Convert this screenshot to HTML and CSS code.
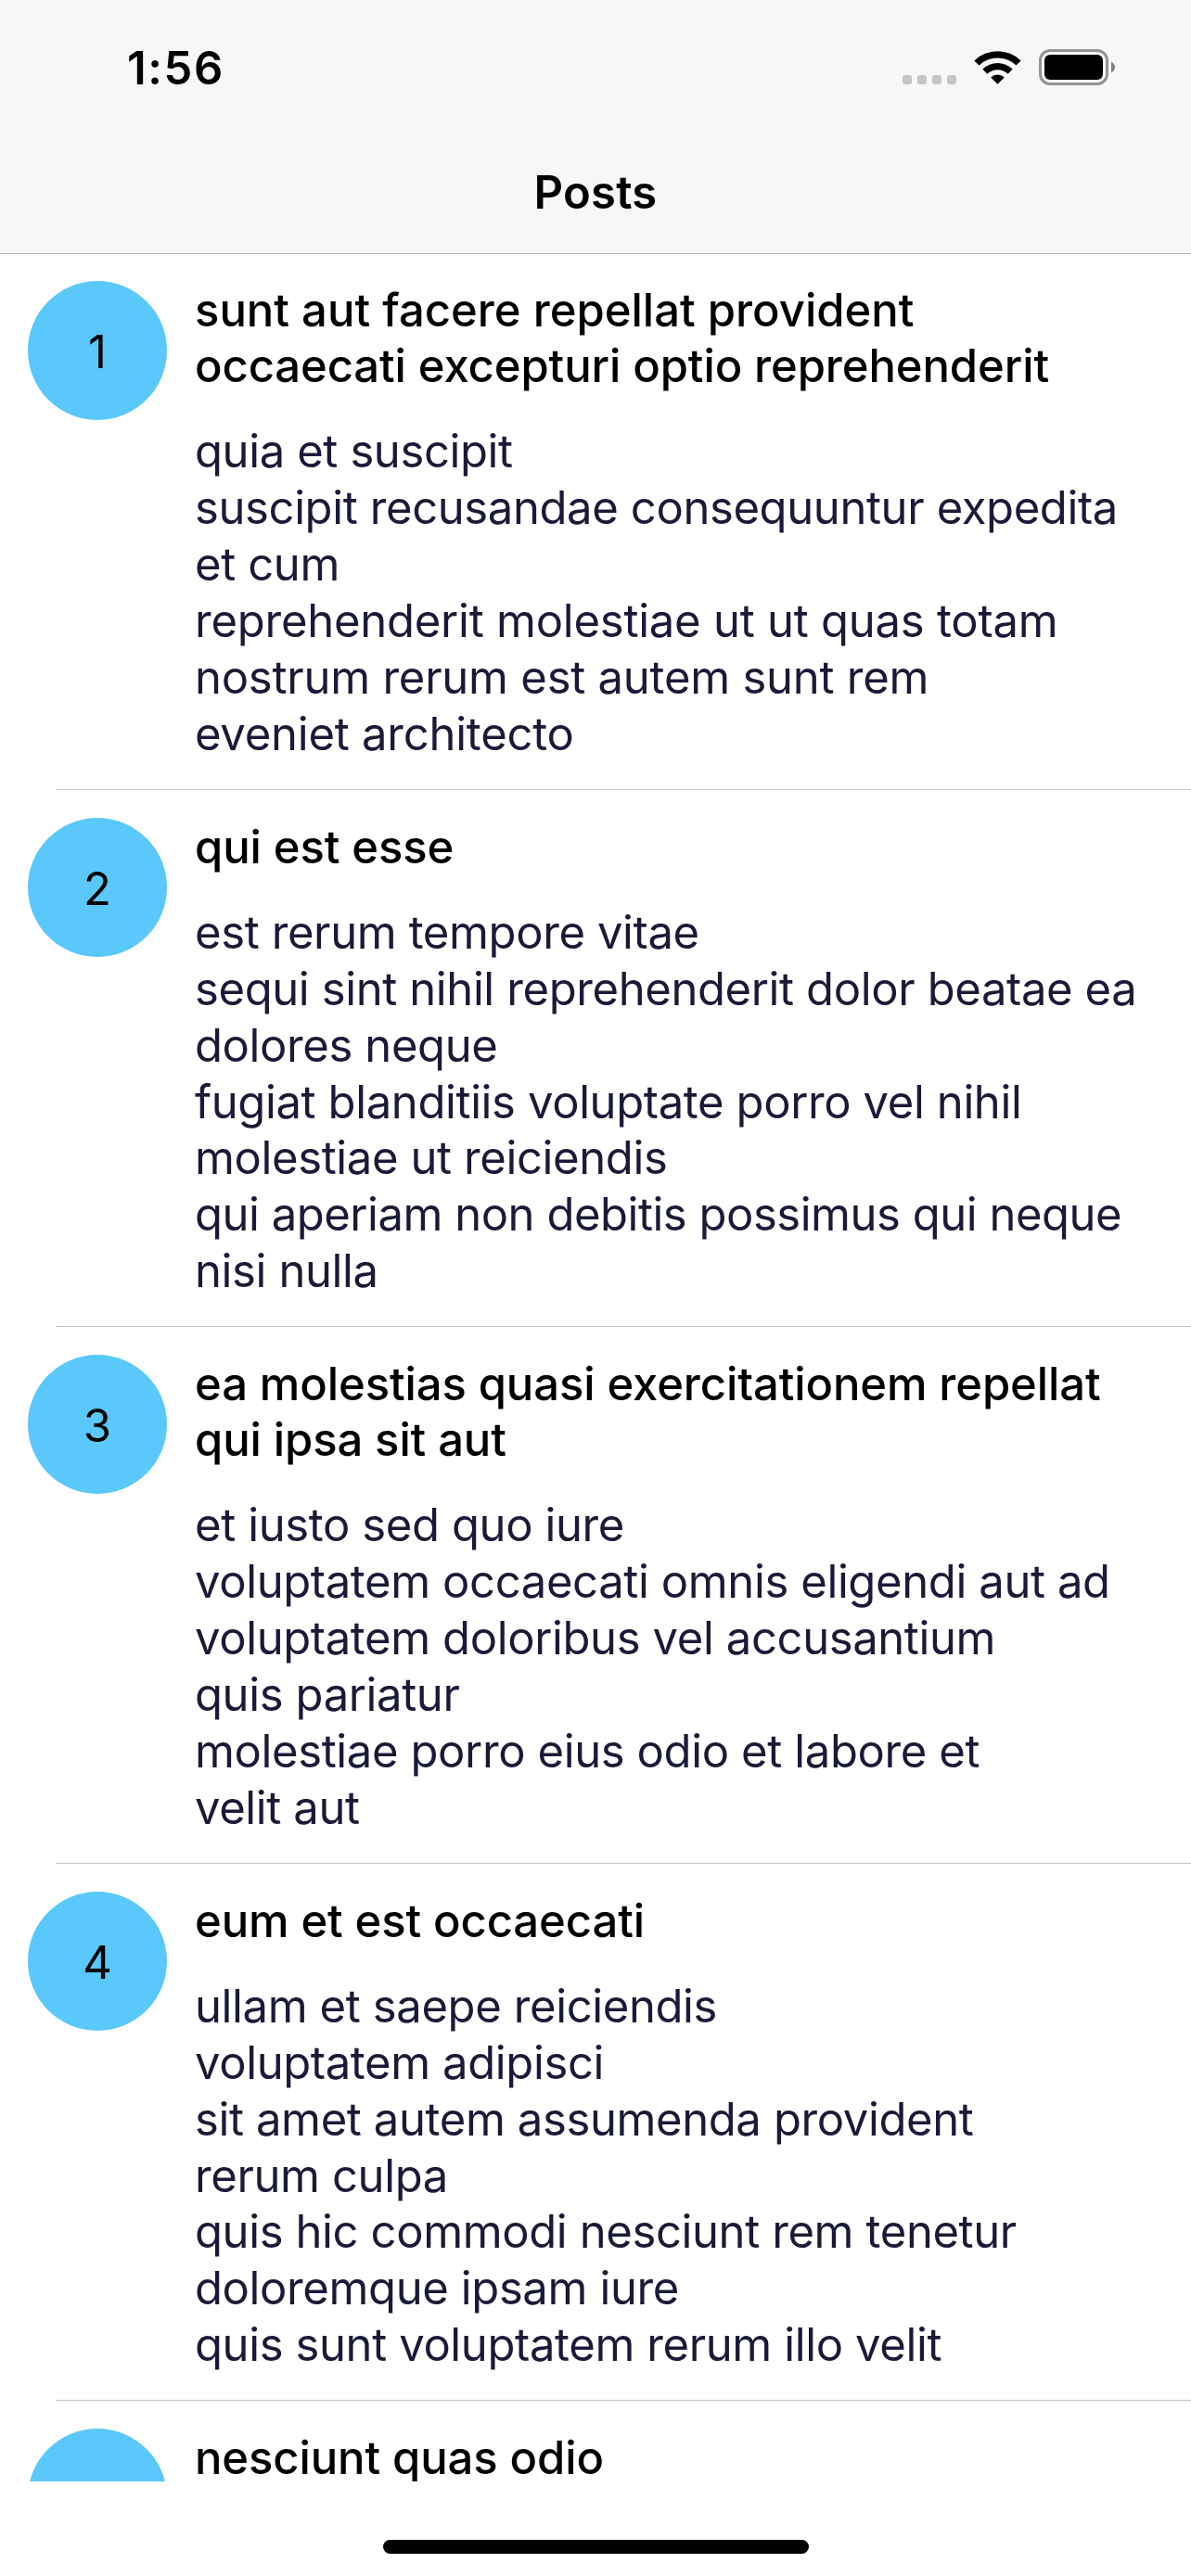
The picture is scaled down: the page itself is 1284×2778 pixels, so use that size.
FILE: index.html
```html
<!DOCTYPE html>
<html lang="en">
<head>
<meta charset="utf-8">
<title>Posts</title>
<link rel="stylesheet" href="styles.css">
</head>
<body>
<div class="screen">
  <header class="nav">
    <div class="status">
      <span class="time">1:56</span>
      <svg class="status-icons" width="232" height="42" viewBox="0 0 232 42">
        <g fill="#c5c5c5">
          <rect x="1" y="29" width="10" height="10" rx="3"/>
          <rect x="17" y="29" width="10" height="10" rx="3"/>
          <rect x="33" y="29" width="10" height="10" rx="3"/>
          <rect x="49" y="29" width="10" height="10" rx="3"/>
        </g>
        <g>
          <path d="M103.500 38.800L96.200 31.400A10.500 10.500 0 0 1 110.800 31.400Z"/>
          <path d="M87.300 22.600A23.000 23.000 0 0 1 119.700 22.600L114.600 27.700A15.900 15.900 0 0 0 92.400 27.700Z"/>
          <path d="M78.400 13.500A35.700 35.700 0 0 1 128.600 13.500L123.500 18.600A28.600 28.600 0 0 0 83.500 18.600Z"/>
        </g>
        <rect x="149.500" y="2.500" width="72" height="36" rx="10.500" fill="none" stroke="#949494" stroke-width="3"/>
        <rect x="154" y="7" width="63" height="27" rx="6"/>
        <path d="M226 14.500Q230 17 230 20.500T226 26.500Z" fill="#808080"/>
      </svg>
    </div>
    <h1 class="nav-title">Posts</h1>
  </header>
  <main class="list">
    <article class="post">
      <div class="badge">1</div>
      <div class="content">
        <h2 class="title"><span class="wide">sunt aut facere repellat provident</span><br>occaecati excepturi optio reprehenderit</h2>
        <p class="text">quia et suscipit<br>suscipit recusandae consequuntur expedita<br>et cum<br><span class="loose">reprehenderit molestiae ut ut quas totam</span><br><span class="loose">nostrum rerum est autem sunt rem</span><br><span class="loose">eveniet architecto</span></p>
      </div>
    </article>
    <article class="post">
      <div class="badge">2</div>
      <div class="content">
        <h2 class="title">qui est esse</h2>
        <p class="text">est rerum tempore vitae<br>sequi sint nihil reprehenderit dolor beatae ea<br>dolores neque<br>fugiat blanditiis voluptate porro vel nihil<br>molestiae ut reiciendis<br><span class="tight">qui aperiam non debitis possimus qui neque</span><br>nisi nulla</p>
      </div>
    </article>
    <article class="post">
      <div class="badge">3</div>
      <div class="content">
        <h2 class="title">ea molestias quasi exercitationem repellat<br>qui ipsa sit aut</h2>
        <p class="text">et iusto sed quo iure<br>voluptatem occaecati omnis eligendi aut ad<br>voluptatem doloribus vel accusantium<br>quis pariatur<br>molestiae porro eius odio et labore et<br>velit aut</p>
      </div>
    </article>
    <article class="post">
      <div class="badge">4</div>
      <div class="content">
        <h2 class="title">eum et est occaecati</h2>
        <p class="text">ullam et saepe reiciendis<br>voluptatem adipisci<br>sit amet autem assumenda provident<br>rerum culpa<br>quis hic commodi nesciunt rem tenetur<br>doloremque ipsam iure<br>quis sunt voluptatem rerum illo velit</p>
      </div>
    </article>
    <article class="post">
      <div class="badge"></div>
      <div class="content">
        <h2 class="title">nesciunt quas odio</h2>
      </div>
    </article>
  </main>
  <footer class="home"><div class="home-bar"></div></footer>
</div>
</body>
</html>
```
FILE: styles.css
```css
* { box-sizing: border-box; }

body {
  margin: 0;
  background: #fff;
  color: #000;
  font-family: Inter, "Liberation Sans", sans-serif;
  font-size: 49px;
}

.screen {
  display: flex;
  flex-direction: column;
  width: 1284px;
  height: 2778px;
  overflow: hidden;
}

.nav {
  position: relative;
  z-index: 1;
  flex: none;
  height: 274px;
  background: #f7f7f7;
  border-bottom: 1px solid #b2b2b2;
}

.status {
  display: flex;
  justify-content: space-between;
  height: 141px;
  padding: 44px 80px 0 137px;
}

.time {
  font-weight: 600;
  line-height: 60px;
  letter-spacing: 1.6px;
}

.status-icons {
  margin-top: 8px;
}

.nav-title {
  margin: 0;
  padding-top: 37px;
  font-size: 49px;
  font-weight: 600;
  line-height: 60px;
  letter-spacing: 0.2px;
  text-align: center;
}

.list {
  flex: none;
  height: 2403px;
  margin-top: -1px;
  overflow: hidden;
}

.post {
  display: flex;
  gap: 30px;
  height: 579px;
  padding: 30px 0 0 30px;
  background: linear-gradient(#c6c6c8, #c6c6c8) 60px 100% / 1224px 1px no-repeat;
}

.badge {
  flex: none;
  width: 150px;
  height: 150px;
  padding-top: 47px;
  border-radius: 50%;
  background: #5ac8fb;
  line-height: 60px;
  text-align: center;
}

.content {
  white-space: nowrap;
}

.title {
  margin: 2px 0 31.6px;
  font-size: 49px;
  font-weight: 500;
  line-height: 60.4px;
  letter-spacing: -0.11px;
}

.wide { letter-spacing: 0; }

.text {
  margin: 0;
  color: #1a1a38;
  line-height: 60.86px;
  letter-spacing: -0.39px;
}

.loose { letter-spacing: -0.24px; }
.tight { letter-spacing: -0.48px; }

.home {
  display: flex;
  justify-content: center;
  padding-top: 63px;
}

.home-bar {
  width: 459px;
  height: 15px;
  border-radius: 8px;
  background: #000;
}
```
